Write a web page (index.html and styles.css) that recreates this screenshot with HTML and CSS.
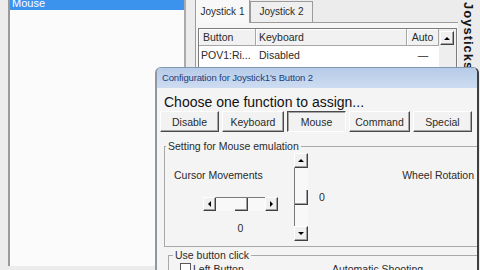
FILE: index.html
```html
<!DOCTYPE html>
<html lang="en">
<head>
    <meta charset="UTF-8">
    <title>Joystick Configuration</title>
    <link rel="stylesheet" href="styles.css">
</head>
<body>
    <div class="app">
        <div class="list-pane">
            <div class="list">
                <div class="list-item selected">Mouse</div>
            </div>
        </div>

        <div class="tabs-pane">
            <div class="tabstrip">
                <div class="tab active">Joystick 1</div>
                <div class="tab">Joystick 2</div>
                <div class="tab-fill"></div>
            </div>
            <div class="tabpage">
                <div class="grid">
                    <div class="hd first">Button</div>
                    <div class="hd">Keyboard</div>
                    <div class="hd center">Auto</div>
                    <div class="grid-scroll"><div class="sbtn"><span class="arr-u"></span></div></div>
                    <div class="cell">POV1:Ri...</div>
                    <div class="cell">Disabled</div>
                    <div class="cell center">—</div>
                </div>
            </div>
        </div>

        <div class="side"><span>Joysticks</span></div>
    </div>

    <div class="dialog">
        <div class="titlebar">Configuration for Joystick1's Button 2</div>
        <div class="prompt">Choose one function to assign...</div>

        <div class="func-row">
            <button class="fbtn w59">Disable</button>
            <button class="fbtn w62">Keyboard</button>
            <button class="fbtn w59 pressed">Mouse</button>
            <button class="fbtn w61">Command</button>
            <button class="fbtn w59">Special</button>
        </div>

        <fieldset class="group mouse-group">
            <legend>Setting for Mouse emulation</legend>
            <div class="mouse-body">
                <div class="cursor-col">
                    <div class="label">Cursor Movements</div>
                    <div class="hwrap">
                        <div class="hscroll">
                            <div class="sbtn"><span class="arr-l"></span></div>
                            <div class="htrack"><div class="hthumb"></div></div>
                            <div class="sbtn"><span class="arr-r"></span></div>
                        </div>
                        <div class="value">0</div>
                    </div>
                </div>
                <div class="wheel-col">
                    <div class="vscroll">
                        <div class="sbtn"><span class="arr-u"></span></div>
                        <div class="vtrack"><div class="vthumb"></div></div>
                        <div class="sbtn"><span class="arr-d"></span></div>
                    </div>
                    <div class="value">0</div>
                </div>
                <div class="wheel-label">Wheel Rotation</div>
            </div>
        </fieldset>

        <fieldset class="group click-group">
            <legend>Use button click</legend>
            <div class="click-body">
                <label class="check"><span class="box"></span>Left Button</label>
                <div class="auto-shoot">Automatic Shooting</div>
            </div>
        </fieldset>
    </div>
</body>
</html>
```

FILE: styles.css
```css
* {
    box-sizing: border-box;
}

body {
    margin: 0;
    width: 480px;
    height: 270px;
    overflow: hidden;
    position: relative;
    background: #ececec;
    font-family: "Liberation Sans", Arial, sans-serif;
    color: #2a2a2a;
}

.app {
    display: flex;
    height: 270px;
}

/* left list */
.list-pane {
    width: 195px;
    padding: 0 9px 0 8px;
}

.list {
    height: 100%;
    background: #fbfbfb;
    border-left: 2px solid #9a9a9a;
    border-right: 2px solid #ababab;
}

.list-item {
    height: 14px;
    margin-top: -4px;
    padding-left: 2px;
    line-height: 14px;
    font-size: 11px;
}

.selected {
    background: #3c93ee;
    color: #fff;
}

/* tabs */
.tabs-pane {
    width: 263px;
    display: flex;
    flex-direction: column;
}

.tabstrip {
    display: flex;
    align-items: flex-end;
    height: 23px;
    font-size: 10px;
}

.tab {
    width: 63px;
    height: 22px;
    line-height: 20px;
    text-align: center;
    background: #efefef;
    border: 1px solid #9b9b9b;
}

.tab.active {
    width: 55px;
    height: 25px;
    padding-top: 3px;
    border-bottom: none;
    background: #f8f8f8;
}

.tab-fill {
    flex: 1;
    height: 1px;
    border-bottom: 1px solid #9b9b9b;
}

.tabpage {
    flex: 1;
    background: #f6f6f6;
    border-left: 1px solid #9b9b9b;
    padding: 5px 0 0 2px;
}

.grid {
    display: grid;
    grid-template-columns: 57px 151px 32px 17px;
    grid-template-rows: 17px 18px 18px;
    width: 259px;
    border: 1px solid #7c7c7c;
    background: #fff;
    font-size: 10.5px;
}

.hd {
    background: #f1f1f1;
    border-right: 1px solid #a7a7a7;
    border-bottom: 1px solid #a7a7a7;
    box-shadow: inset 1px 1px #fff;
    line-height: 16px;
    padding-left: 3px;
}

.hd.first {
    padding-left: 4px;
}

.cell {
    line-height: 18px;
    padding-left: 2px;
    white-space: nowrap;
}

.cell + .cell {
    padding-left: 3px;
}

.center {
    text-align: center;
    padding-left: 0 !important;
}

.grid-scroll {
    grid-row: 1 / span 3;
    grid-column: 4;
    background: #eeeeee;
    padding: 2px 2px 0 1px;
}

.grid-scroll .sbtn {
    width: 14px;
    height: 14px;
}

.side {
    width: 21px;
    display: flex;
    justify-content: center;
    padding-top: 2px;
}

.side span {
    writing-mode: vertical-rl;
    font-weight: bold;
    font-size: 13px;
    letter-spacing: 1px;
    color: #151515;
}

/* dialog window */
.dialog {
    position: absolute;
    left: 155px;
    top: 67px;
    width: 324px;
    height: 210px;
    background: #f4f4f4;
    border-top: 1px solid #8397b3;
    border-left: 2px solid #8e98a5;
    border-right: 2px solid #3f3f3f;
    border-radius: 6px 6px 0 0;
    overflow: hidden;
}

.titlebar {
    height: 20px;
    line-height: 20px;
    padding-left: 5px;
    background: linear-gradient(#b6cbe8, #cddcf1);
    color: #1c3c7c;
    font-size: 9.5px;
    letter-spacing: -0.15px;
    white-space: nowrap;
}

.prompt {
    margin: 6px 0 0 7px;
    font-size: 14px;
    line-height: 16px;
    color: #111;
}

.func-row {
    display: flex;
    gap: 3px;
    margin: 1px 0 0 3px;
}

.fbtn {
    height: 21px;
    padding: 0;
    font: 10.5px "Liberation Sans", Arial, sans-serif;
    color: #2a2a2a;
    background: #f2f2f2;
    border: 1px solid;
    border-color: #fff #4a4a4a #4a4a4a #fff;
    box-shadow: inset -1px -1px #a5a5a5;
}

.fbtn.pressed {
    border-color: #4a4a4a #fff #fff #4a4a4a;
    box-shadow: inset 1px 1px #a5a5a5;
}

.w59 { width: 59px; }
.w61 { width: 61px; }
.w62 { width: 62px; }

.group {
    width: 320px;
    min-width: 0;
    margin: 8px 0 0 7px;
    padding: 0;
    border: 1px solid #a9a9a9;
    font-size: 10.5px;
}

.group legend {
    padding: 0 2px;
    margin-left: 1px;
    line-height: 12px;
}

.mouse-body {
    display: flex;
    align-items: flex-start;
    padding: 1px 0 5px 0;
}

.cursor-col {
    width: 129px;
    padding-left: 9px;
}

.label {
    margin-top: 16px;
    line-height: 12px;
    white-space: nowrap;
}

.hwrap {
    width: 75px;
    margin: 16px 0 0 29px;
}

.hscroll {
    display: flex;
    height: 14px;
}

.sbtn {
    width: 13px;
    height: 14px;
    flex: none;
    display: flex;
    align-items: center;
    justify-content: center;
    background: #f0f0f0;
    border: 1px solid;
    border-color: #fff #404040 #404040 #fff;
    box-shadow: inset -1px -1px #a0a0a0;
}

.htrack {
    flex: 1;
    border-top: 1px solid #7a7a7a;
    background: #f8f8f8;
}

.hthumb {
    width: 13px;
    height: 13px;
    margin-left: 19px;
    border-right: 1px solid #404040;
    border-bottom: 1px solid #404040;
    box-shadow: inset -1px -1px #a0a0a0;
}

.value {
    margin-top: 11px;
    line-height: 12px;
    text-align: center;
}

.wheel-col {
    display: flex;
    align-items: center;
}

.wheel-col .value {
    margin: 0 0 0 11px;
}

.vscroll {
    width: 14px;
    height: 88px;
    display: flex;
    flex-direction: column;
}

.vscroll .sbtn {
    width: 14px;
    height: 15px;
}

.vtrack {
    flex: 1;
    border-left: 1px solid #7a7a7a;
    background: #f8f8f8;
}

.vthumb {
    height: 15px;
    margin-top: 22px;
    border-right: 1px solid #404040;
    border-bottom: 1px solid #404040;
    box-shadow: inset -1px -1px #a0a0a0;
}

.wheel-label {
    flex: 1;
    margin-top: 16px;
    padding-right: 9px;
    line-height: 12px;
    text-align: right;
    white-space: nowrap;
}

.click-group {
    margin: 2px 0 0 11px;
}

.click-group legend {
    margin-left: 4px;
}

.click-body {
    display: grid;
    grid-template-columns: 152px auto;
    padding: 2px 0 0 11px;
    line-height: 12px;
}

.check {
    display: flex;
    gap: 2px;
}

.box {
    width: 11px;
    height: 11px;
    border: 1px solid #5a5a5a;
    background: #fff;
}

/* arrow glyphs */
.arr-l, .arr-r, .arr-u, .arr-d {
    width: 0;
    height: 0;
    border: 3px solid transparent;
}

.arr-l { border-right-color: #000; border-left-width: 0; }
.arr-r { border-left-color: #000; border-right-width: 0; }
.arr-u { border-bottom-color: #000; border-top-width: 0; }
.arr-d { border-top-color: #000; border-bottom-width: 0; }
```
